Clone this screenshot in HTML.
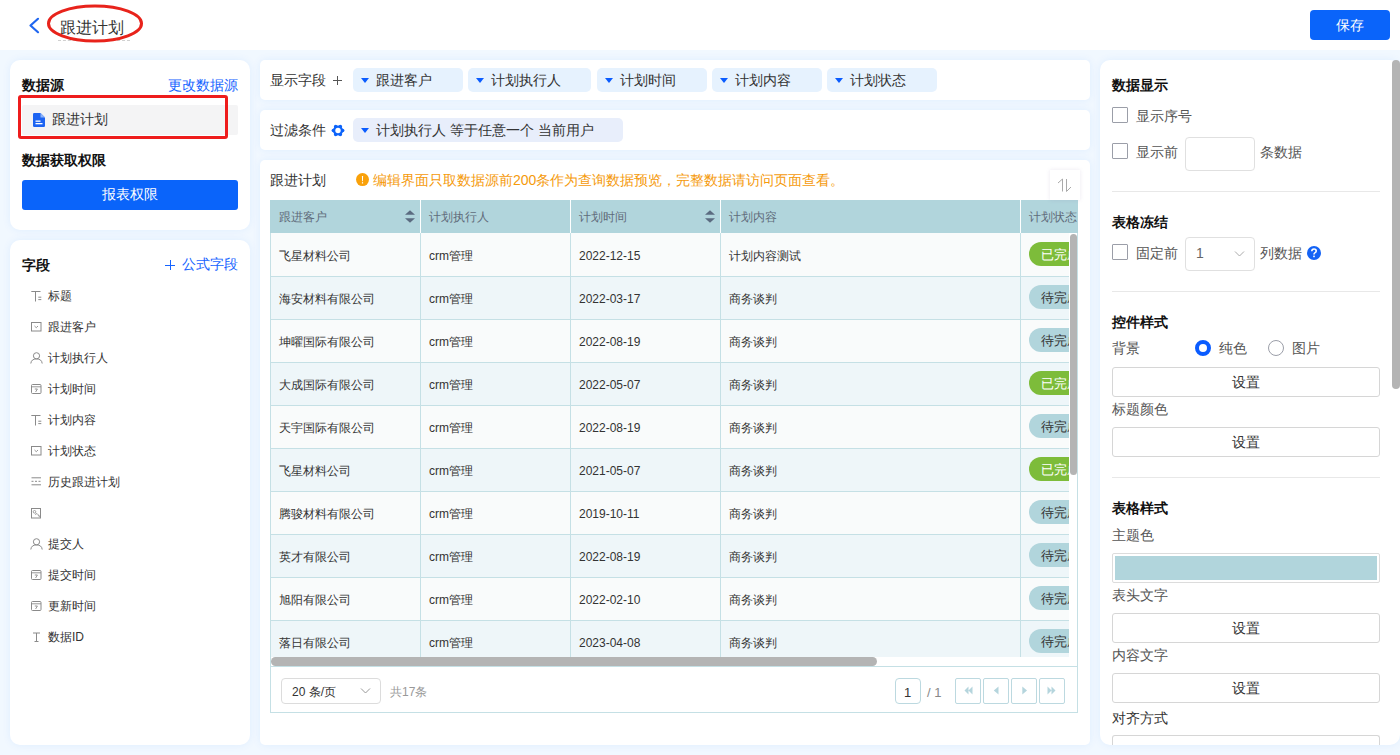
<!DOCTYPE html>
<html><head><meta charset="utf-8">
<style>
*{box-sizing:border-box;margin:0;padding:0}
html,body{width:1400px;height:755px;overflow:hidden}
body{position:relative;background:#f1f8ff;font-family:"Liberation Sans",sans-serif;color:#333;font-size:14px}
.a{position:absolute}
.t{position:absolute;white-space:nowrap;line-height:1}
.card{position:absolute;background:#fff;border-radius:10px;box-shadow:0 0 8px rgba(0,120,255,0.08)}
.b{font-weight:bold;color:#111}
.blue{color:#1664ff}
.fi{position:absolute;left:30px}
.ft{position:absolute;left:48px;font-size:12px;line-height:1;color:#333;white-space:nowrap}
.tag{position:absolute;top:68px;height:24px;background:#e6f2fe;border-radius:5px}
.tri{position:absolute;width:0;height:0;border-left:4.5px solid transparent;border-right:4.5px solid transparent;border-top:5px solid #0a5cff}
.tt{position:absolute;font-size:14px;line-height:1;color:#333;white-space:nowrap}
.cell{position:absolute;font-size:12px;line-height:1;white-space:nowrap;color:#333}
.pill{position:absolute;left:1029px;height:24px;width:60px;border-radius:12px}
.pb{position:absolute;top:678px;width:26px;height:26px;border:1px solid #bcd9e0;border-radius:2px;background:#fff}
.cb{position:absolute;left:1112px;width:16px;height:16px;border:1px solid #9b9ea8;border-radius:1px;background:#fff}
.rl{position:absolute;font-size:14px;line-height:1;color:#555;white-space:nowrap}
.btn{position:absolute;left:1112px;width:268px;height:30px;border:1px solid #d6d6d6;border-radius:3px;background:#fff}
.bt{position:absolute;left:1232px;font-size:14px;line-height:1;color:#333;white-space:nowrap}
.sep{position:absolute;left:1112px;width:268px;height:1px;background:#e8e8e8}
</style></head><body>

<div class="a" style="left:0;top:0;width:1400px;height:50px;background:#fff"></div>
<svg class="a" style="left:27px;top:16px" width="14" height="19" viewBox="0 0 14 19"><polyline points="11,2.8 3.5,9.5 11,16.2" fill="none" stroke="#1f66f0" stroke-width="2.2" stroke-linecap="round" stroke-linejoin="round"/></svg>
<div class="t" style="left:60px;top:20px;font-size:16px;color:#333">跟进计划</div>
<div class="a" style="left:58px;top:40px;width:72px;height:0;border-top:1px dashed #d0d0d0"></div>
<svg class="a" style="left:44px;top:2px" width="104" height="44" viewBox="0 0 104 44"><ellipse cx="51" cy="21.5" rx="46.5" ry="17.5" fill="none" stroke="#e8231b" stroke-width="3"/></svg>
<div class="a" style="left:1310px;top:10px;width:80px;height:30px;background:#0a64fa;border-radius:4px"></div>
<div class="t" style="left:1336px;top:18px;font-size:14px;color:#fff">保存</div>

<div class="card" style="left:10px;top:60px;width:240px;height:170px"></div>
<div class="t b" style="left:22px;top:78px">数据源</div>
<div class="t blue" style="left:168px;top:78px">更改数据源</div>
<div class="a" style="left:22px;top:105px;width:216px;height:30px;background:#f4f4f5;border-radius:2px"></div>
<svg class="a" style="left:33px;top:113px" width="12" height="14" viewBox="0 0 12 14"><path d="M0 1.2Q0 0 1.2 0H7.5L12 4.5V12.8Q12 14 10.8 14H1.2Q0 14 0 12.8Z" fill="#1d64f2"/><path d="M7.5 0V4.5H12" fill="#8fb4f8"/><rect x="2.5" y="7.5" width="5" height="1.3" fill="#fff"/><rect x="2.5" y="10" width="7" height="1.3" fill="#fff"/></svg>
<div class="t" style="left:52px;top:112px;color:#333">跟进计划</div>
<div class="a" style="left:18px;top:95px;width:210px;height:44px;border:3px solid #ee1c1c;border-radius:3px"></div>
<div class="t b" style="left:22px;top:153px">数据获取权限</div>
<div class="a" style="left:22px;top:180px;width:216px;height:30px;background:#0a64fa;border-radius:3px"></div>
<div class="t" style="left:102px;top:187px;color:#fff">报表权限</div>

<div class="card" style="left:10px;top:240px;width:240px;height:505px"></div>
<div class="t b" style="left:22px;top:258px">字段</div>
<svg class="a" style="left:165px;top:260px" width="11" height="11" viewBox="0 0 11 11"><path d="M0 5.5H10M5.5 0V10" stroke="#1664ff" stroke-width="1" fill="none"/></svg><div class="t blue" style="left:182px;top:257px">公式字段</div>

<div class="fi" style="top:289.0px"><svg width="12" height="12" viewBox="0 0 12 12"><path d="M1.3 1.5H10.5M5.5 1.5V11.5M8.3 7.2H11.3M8.3 9.6H11.3" stroke="#8a8a8a" stroke-width="1" fill="none"/></svg></div>
<div class="ft" style="top:289.5px">标题</div>
<div class="fi" style="top:320.0px"><svg width="12" height="12" viewBox="0 0 12 12"><rect x="1.5" y="1.5" width="9.5" height="8.5" stroke="#8a8a8a" stroke-width="1" fill="none"/><path d="M4.5 5L6.25 6.7L8 5" stroke="#8a8a8a" stroke-width="0.9" fill="none"/></svg></div>
<div class="ft" style="top:320.5px">跟进客户</div>
<div class="fi" style="top:351.0px"><svg width="13" height="12" viewBox="0 0 13 12"><circle cx="6.5" cy="3.8" r="3.1" stroke="#8a8a8a" stroke-width="1" fill="none"/><path d="M0.8 11.5Q1.3 6.9 6.5 6.9Q11.7 6.9 12.2 11.5" stroke="#8a8a8a" stroke-width="1" fill="none"/></svg></div>
<div class="ft" style="top:351.5px">计划执行人</div>
<div class="fi" style="top:382.0px"><svg width="12" height="12" viewBox="0 0 12 12"><rect x="1.5" y="1.5" width="9.5" height="9" rx="1" stroke="#8a8a8a" stroke-width="1" fill="none"/><path d="M1.5 3.8H11M4.8 6H7.4L5.6 9" stroke="#8a8a8a" stroke-width="0.9" fill="none"/></svg></div>
<div class="ft" style="top:382.5px">计划时间</div>
<div class="fi" style="top:413.0px"><svg width="12" height="12" viewBox="0 0 12 12"><path d="M1.3 1.5H10.5M5.5 1.5V11.5M8.3 7.2H11.3M8.3 9.6H11.3" stroke="#8a8a8a" stroke-width="1" fill="none"/></svg></div>
<div class="ft" style="top:413.5px">计划内容</div>
<div class="fi" style="top:444.0px"><svg width="12" height="12" viewBox="0 0 12 12"><rect x="1.5" y="1.5" width="9.5" height="8.5" stroke="#8a8a8a" stroke-width="1" fill="none"/><path d="M4.5 5L6.25 6.7L8 5" stroke="#8a8a8a" stroke-width="0.9" fill="none"/></svg></div>
<div class="ft" style="top:444.5px">计划状态</div>
<div class="fi" style="top:475.0px"><svg width="12" height="12" viewBox="0 0 12 12"><path d="M1.5 1.8H11M1.5 8.8H11" stroke="#8a8a8a" stroke-width="1" fill="none"/><path d="M1.5 5.3H11" stroke="#8a8a8a" stroke-width="1" stroke-dasharray="2 1.5" fill="none"/></svg></div>
<div class="ft" style="top:475.5px">历史跟进计划</div>
<div class="fi" style="top:506.0px"><svg width="12" height="12" viewBox="0 0 12 12"><rect x="1.5" y="1.5" width="9" height="9.5" stroke="#8a8a8a" stroke-width="1" fill="none"/><circle cx="4.5" cy="4.8" r="1.3" stroke="#8a8a8a" stroke-width="0.8" fill="none"/><path d="M5 7.5L7 6.5L9.5 9M7.8 8.2L10.5 10.5" stroke="#8a8a8a" stroke-width="0.8" fill="none"/></svg></div>
<div class="fi" style="top:537.0px"><svg width="13" height="12" viewBox="0 0 13 12"><circle cx="6.5" cy="3.8" r="3.1" stroke="#8a8a8a" stroke-width="1" fill="none"/><path d="M0.8 11.5Q1.3 6.9 6.5 6.9Q11.7 6.9 12.2 11.5" stroke="#8a8a8a" stroke-width="1" fill="none"/></svg></div>
<div class="ft" style="top:537.5px">提交人</div>
<div class="fi" style="top:568.0px"><svg width="12" height="12" viewBox="0 0 12 12"><rect x="1.5" y="1.5" width="9.5" height="9" rx="1" stroke="#8a8a8a" stroke-width="1" fill="none"/><path d="M1.5 3.8H11M4.8 6H7.4L5.6 9" stroke="#8a8a8a" stroke-width="0.9" fill="none"/></svg></div>
<div class="ft" style="top:568.5px">提交时间</div>
<div class="fi" style="top:599.0px"><svg width="12" height="12" viewBox="0 0 12 12"><rect x="1.5" y="1.5" width="9.5" height="9" rx="1" stroke="#8a8a8a" stroke-width="1" fill="none"/><path d="M1.5 3.8H11M4.8 6H7.4L5.6 9" stroke="#8a8a8a" stroke-width="0.9" fill="none"/></svg></div>
<div class="ft" style="top:599.5px">更新时间</div>
<div class="fi" style="top:630.0px"><svg width="12" height="12" viewBox="0 0 12 12"><path d="M3 2H10M6.5 2V10.5M4.5 10.5H8.5" stroke="#8a8a8a" stroke-width="1" fill="none"/></svg></div>
<div class="ft" style="top:630.5px">数据ID</div>
<div class="card" style="left:260px;top:60px;width:830px;height:40px;border-radius:5px"></div>
<div class="card" style="left:260px;top:110px;width:830px;height:40px;border-radius:5px"></div>
<div class="card" style="left:260px;top:160px;width:830px;height:585px;border-radius:5px"></div>
<div class="tt" style="left:270px;top:73px">显示字段</div>
<svg class="a" style="left:333px;top:76px" width="9" height="9" viewBox="0 0 9 9"><path d="M0 4.5H9M4.5 0V9" stroke="#555" stroke-width="1" fill="none"/></svg>

<div class="tag" style="left:353px;width:110px"></div><div class="tri" style="left:361px;top:78px"></div><div class="tt" style="left:376px;top:73px">跟进客户</div>
<div class="tag" style="left:468px;width:123px"></div><div class="tri" style="left:476px;top:78px"></div><div class="tt" style="left:491px;top:73px">计划执行人</div>
<div class="tag" style="left:597px;width:110px"></div><div class="tri" style="left:605px;top:78px"></div><div class="tt" style="left:620px;top:73px">计划时间</div>
<div class="tag" style="left:712px;width:110px"></div><div class="tri" style="left:720px;top:78px"></div><div class="tt" style="left:735px;top:73px">计划内容</div>
<div class="tag" style="left:827px;width:110px"></div><div class="tri" style="left:835px;top:78px"></div><div class="tt" style="left:850px;top:73px">计划状态</div>
<div class="tt" style="left:270px;top:123px">过滤条件</div>
<svg class="a" style="left:330.5px;top:123.5px" width="14" height="13" viewBox="0 0 14 13"><g fill="#0c63fa"><circle cx="7" cy="6.5" r="5.1"/><circle cx="11.70" cy="6.50" r="1.75"/><circle cx="9.35" cy="10.57" r="1.75"/><circle cx="4.65" cy="10.57" r="1.75"/><circle cx="2.30" cy="6.50" r="1.75"/><circle cx="4.65" cy="2.43" r="1.75"/><circle cx="9.35" cy="2.43" r="1.75"/></g><circle cx="7" cy="6.5" r="2.7" fill="#fff"/></svg>
<div class="a" style="left:353px;top:118px;width:270px;height:24px;background:#e8eefb;border-radius:5px"></div>
<div class="tri" style="left:361px;top:128px"></div>
<div class="tt" style="left:376px;top:123px">计划执行人 等于任意一个 当前用户</div>

<div class="tt" style="left:270px;top:173px">跟进计划</div>
<svg class="a" style="left:356px;top:173px" width="14" height="14" viewBox="0 0 14 14"><circle cx="6.5" cy="6.6" r="6.5" fill="#f9a10a"/><path d="M5.9 3H7.1L6.9 8.3H6.1Z" fill="#fff"/><rect x="5.9" y="9.2" width="1.2" height="1.3" fill="#fff"/></svg>
<div class="tt" style="left:373px;top:173px;color:#f59a0b">编辑界面只取数据源前200条作为查询数据预览，完整数据请访问页面查看。</div>

<div class="a" style="left:270px;top:200px;width:808px;height:513px;border:1px solid #c5e0e5;border-top:none;background:#fff"></div>
<div class="a" style="left:270px;top:200px;width:808px;height:33px;background:#b1d5dc"></div>
<div class="a" style="left:420px;top:200px;width:1px;height:33px;background:#fff"></div>
<div class="a" style="left:570px;top:200px;width:1px;height:33px;background:#fff"></div>
<div class="a" style="left:720px;top:200px;width:1px;height:33px;background:#fff"></div>
<div class="a" style="left:1020px;top:200px;width:1px;height:33px;background:#fff"></div>
<div class="cell" style="left:279px;top:211px;color:#5f6b7a">跟进客户</div>
<div class="cell" style="left:429px;top:211px;color:#5f6b7a">计划执行人</div>
<div class="cell" style="left:579px;top:211px;color:#5f6b7a">计划时间</div>
<div class="cell" style="left:729px;top:211px;color:#5f6b7a">计划内容</div>
<div class="cell" style="left:1029px;top:211px;color:#5f6b7a">计划状态</div>
<svg class="a" style="left:405px;top:210px" width="10" height="13" viewBox="0 0 10 13"><path d="M0 4.8L5 0.3L10 4.8Z M0 8.2L5 12.7L10 8.2Z" fill="#5b6b80"/></svg>
<svg class="a" style="left:705px;top:210px" width="10" height="13" viewBox="0 0 10 13"><path d="M0 4.8L5 0.3L10 4.8Z M0 8.2L5 12.7L10 8.2Z" fill="#5b6b80"/></svg>
<div class="a" style="left:271px;top:233px;width:798px;height:424px;overflow:hidden">
<div class="a" style="left:0;top:0px;width:900px;height:43px;background:#f9fbfb"></div>
<div class="a" style="left:0;top:43px;width:900px;height:1px;background:#c5e0e5;z-index:2"></div>
<div class="a" style="left:149px;top:0px;width:1px;height:43px;background:#c5e0e5"></div>
<div class="a" style="left:299px;top:0px;width:1px;height:43px;background:#c5e0e5"></div>
<div class="a" style="left:449px;top:0px;width:1px;height:43px;background:#c5e0e5"></div>
<div class="a" style="left:749px;top:0px;width:1px;height:43px;background:#c5e0e5"></div>
<div class="cell" style="left:8px;top:17px">飞星材料公司</div>
<div class="cell" style="left:158px;top:17px">crm管理</div>
<div class="cell" style="left:308px;top:17px">2022-12-15</div>
<div class="cell" style="left:458px;top:17px">计划内容测试</div>
<div class="pill" style="left:758px;top:9px;background:#7dbc3a"></div>
<div class="cell" style="left:770px;top:15px;font-size:13px;color:#fff">已完成</div>
<div class="a" style="left:0;top:43px;width:900px;height:43px;background:#eef6f9"></div>
<div class="a" style="left:0;top:86px;width:900px;height:1px;background:#c5e0e5;z-index:2"></div>
<div class="a" style="left:149px;top:43px;width:1px;height:43px;background:#c5e0e5"></div>
<div class="a" style="left:299px;top:43px;width:1px;height:43px;background:#c5e0e5"></div>
<div class="a" style="left:449px;top:43px;width:1px;height:43px;background:#c5e0e5"></div>
<div class="a" style="left:749px;top:43px;width:1px;height:43px;background:#c5e0e5"></div>
<div class="cell" style="left:8px;top:60px">海安材料有限公司</div>
<div class="cell" style="left:158px;top:60px">crm管理</div>
<div class="cell" style="left:308px;top:60px">2022-03-17</div>
<div class="cell" style="left:458px;top:60px">商务谈判</div>
<div class="pill" style="left:758px;top:52px;background:#b1d5dc"></div>
<div class="cell" style="left:770px;top:58px;font-size:13px;color:#333">待完成</div>
<div class="a" style="left:0;top:86px;width:900px;height:43px;background:#f9fbfb"></div>
<div class="a" style="left:0;top:129px;width:900px;height:1px;background:#c5e0e5;z-index:2"></div>
<div class="a" style="left:149px;top:86px;width:1px;height:43px;background:#c5e0e5"></div>
<div class="a" style="left:299px;top:86px;width:1px;height:43px;background:#c5e0e5"></div>
<div class="a" style="left:449px;top:86px;width:1px;height:43px;background:#c5e0e5"></div>
<div class="a" style="left:749px;top:86px;width:1px;height:43px;background:#c5e0e5"></div>
<div class="cell" style="left:8px;top:103px">坤曜国际有限公司</div>
<div class="cell" style="left:158px;top:103px">crm管理</div>
<div class="cell" style="left:308px;top:103px">2022-08-19</div>
<div class="cell" style="left:458px;top:103px">商务谈判</div>
<div class="pill" style="left:758px;top:95px;background:#b1d5dc"></div>
<div class="cell" style="left:770px;top:101px;font-size:13px;color:#333">待完成</div>
<div class="a" style="left:0;top:129px;width:900px;height:43px;background:#eef6f9"></div>
<div class="a" style="left:0;top:172px;width:900px;height:1px;background:#c5e0e5;z-index:2"></div>
<div class="a" style="left:149px;top:129px;width:1px;height:43px;background:#c5e0e5"></div>
<div class="a" style="left:299px;top:129px;width:1px;height:43px;background:#c5e0e5"></div>
<div class="a" style="left:449px;top:129px;width:1px;height:43px;background:#c5e0e5"></div>
<div class="a" style="left:749px;top:129px;width:1px;height:43px;background:#c5e0e5"></div>
<div class="cell" style="left:8px;top:146px">大成国际有限公司</div>
<div class="cell" style="left:158px;top:146px">crm管理</div>
<div class="cell" style="left:308px;top:146px">2022-05-07</div>
<div class="cell" style="left:458px;top:146px">商务谈判</div>
<div class="pill" style="left:758px;top:138px;background:#7dbc3a"></div>
<div class="cell" style="left:770px;top:144px;font-size:13px;color:#fff">已完成</div>
<div class="a" style="left:0;top:172px;width:900px;height:43px;background:#f9fbfb"></div>
<div class="a" style="left:0;top:215px;width:900px;height:1px;background:#c5e0e5;z-index:2"></div>
<div class="a" style="left:149px;top:172px;width:1px;height:43px;background:#c5e0e5"></div>
<div class="a" style="left:299px;top:172px;width:1px;height:43px;background:#c5e0e5"></div>
<div class="a" style="left:449px;top:172px;width:1px;height:43px;background:#c5e0e5"></div>
<div class="a" style="left:749px;top:172px;width:1px;height:43px;background:#c5e0e5"></div>
<div class="cell" style="left:8px;top:189px">天宇国际有限公司</div>
<div class="cell" style="left:158px;top:189px">crm管理</div>
<div class="cell" style="left:308px;top:189px">2022-08-19</div>
<div class="cell" style="left:458px;top:189px">商务谈判</div>
<div class="pill" style="left:758px;top:181px;background:#b1d5dc"></div>
<div class="cell" style="left:770px;top:187px;font-size:13px;color:#333">待完成</div>
<div class="a" style="left:0;top:215px;width:900px;height:43px;background:#eef6f9"></div>
<div class="a" style="left:0;top:258px;width:900px;height:1px;background:#c5e0e5;z-index:2"></div>
<div class="a" style="left:149px;top:215px;width:1px;height:43px;background:#c5e0e5"></div>
<div class="a" style="left:299px;top:215px;width:1px;height:43px;background:#c5e0e5"></div>
<div class="a" style="left:449px;top:215px;width:1px;height:43px;background:#c5e0e5"></div>
<div class="a" style="left:749px;top:215px;width:1px;height:43px;background:#c5e0e5"></div>
<div class="cell" style="left:8px;top:232px">飞星材料公司</div>
<div class="cell" style="left:158px;top:232px">crm管理</div>
<div class="cell" style="left:308px;top:232px">2021-05-07</div>
<div class="cell" style="left:458px;top:232px">商务谈判</div>
<div class="pill" style="left:758px;top:224px;background:#7dbc3a"></div>
<div class="cell" style="left:770px;top:230px;font-size:13px;color:#fff">已完成</div>
<div class="a" style="left:0;top:258px;width:900px;height:43px;background:#f9fbfb"></div>
<div class="a" style="left:0;top:301px;width:900px;height:1px;background:#c5e0e5;z-index:2"></div>
<div class="a" style="left:149px;top:258px;width:1px;height:43px;background:#c5e0e5"></div>
<div class="a" style="left:299px;top:258px;width:1px;height:43px;background:#c5e0e5"></div>
<div class="a" style="left:449px;top:258px;width:1px;height:43px;background:#c5e0e5"></div>
<div class="a" style="left:749px;top:258px;width:1px;height:43px;background:#c5e0e5"></div>
<div class="cell" style="left:8px;top:275px">腾骏材料有限公司</div>
<div class="cell" style="left:158px;top:275px">crm管理</div>
<div class="cell" style="left:308px;top:275px">2019-10-11</div>
<div class="cell" style="left:458px;top:275px">商务谈判</div>
<div class="pill" style="left:758px;top:267px;background:#b1d5dc"></div>
<div class="cell" style="left:770px;top:273px;font-size:13px;color:#333">待完成</div>
<div class="a" style="left:0;top:301px;width:900px;height:43px;background:#eef6f9"></div>
<div class="a" style="left:0;top:344px;width:900px;height:1px;background:#c5e0e5;z-index:2"></div>
<div class="a" style="left:149px;top:301px;width:1px;height:43px;background:#c5e0e5"></div>
<div class="a" style="left:299px;top:301px;width:1px;height:43px;background:#c5e0e5"></div>
<div class="a" style="left:449px;top:301px;width:1px;height:43px;background:#c5e0e5"></div>
<div class="a" style="left:749px;top:301px;width:1px;height:43px;background:#c5e0e5"></div>
<div class="cell" style="left:8px;top:318px">英才有限公司</div>
<div class="cell" style="left:158px;top:318px">crm管理</div>
<div class="cell" style="left:308px;top:318px">2022-08-19</div>
<div class="cell" style="left:458px;top:318px">商务谈判</div>
<div class="pill" style="left:758px;top:310px;background:#b1d5dc"></div>
<div class="cell" style="left:770px;top:316px;font-size:13px;color:#333">待完成</div>
<div class="a" style="left:0;top:344px;width:900px;height:43px;background:#f9fbfb"></div>
<div class="a" style="left:0;top:387px;width:900px;height:1px;background:#c5e0e5;z-index:2"></div>
<div class="a" style="left:149px;top:344px;width:1px;height:43px;background:#c5e0e5"></div>
<div class="a" style="left:299px;top:344px;width:1px;height:43px;background:#c5e0e5"></div>
<div class="a" style="left:449px;top:344px;width:1px;height:43px;background:#c5e0e5"></div>
<div class="a" style="left:749px;top:344px;width:1px;height:43px;background:#c5e0e5"></div>
<div class="cell" style="left:8px;top:361px">旭阳有限公司</div>
<div class="cell" style="left:158px;top:361px">crm管理</div>
<div class="cell" style="left:308px;top:361px">2022-02-10</div>
<div class="cell" style="left:458px;top:361px">商务谈判</div>
<div class="pill" style="left:758px;top:353px;background:#b1d5dc"></div>
<div class="cell" style="left:770px;top:359px;font-size:13px;color:#333">待完成</div>
<div class="a" style="left:0;top:387px;width:900px;height:43px;background:#eef6f9"></div>
<div class="a" style="left:0;top:430px;width:900px;height:1px;background:#c5e0e5;z-index:2"></div>
<div class="a" style="left:149px;top:387px;width:1px;height:43px;background:#c5e0e5"></div>
<div class="a" style="left:299px;top:387px;width:1px;height:43px;background:#c5e0e5"></div>
<div class="a" style="left:449px;top:387px;width:1px;height:43px;background:#c5e0e5"></div>
<div class="a" style="left:749px;top:387px;width:1px;height:43px;background:#c5e0e5"></div>
<div class="cell" style="left:8px;top:404px">落日有限公司</div>
<div class="cell" style="left:158px;top:404px">crm管理</div>
<div class="cell" style="left:308px;top:404px">2023-04-08</div>
<div class="cell" style="left:458px;top:404px">商务谈判</div>
<div class="pill" style="left:758px;top:396px;background:#b1d5dc"></div>
<div class="cell" style="left:770px;top:402px;font-size:13px;color:#333">待完成</div>
</div>
<div class="a" style="left:1069px;top:233px;width:8px;height:424px;background:#fff"></div>
<div class="a" style="left:1070px;top:234px;width:7px;height:241px;background:#b4b4b4;border-radius:4px"></div>
<div class="a" style="left:271px;top:657px;width:806px;height:9px;background:#fff"></div>
<div class="a" style="left:271px;top:657px;width:606px;height:9px;background:#b4b4b4;border-radius:5px"></div>
<div class="a" style="left:270px;top:666px;width:808px;height:1px;background:#c5e0e5"></div>
<div class="a" style="left:1050px;top:170px;width:30px;height:30px;background:#fff;box-shadow:0 0 4px rgba(120,100,160,0.15)"></div>
<svg class="a" style="left:1055px;top:177px" width="20" height="16" viewBox="0 0 20 16"><path d="M3 6L7.5 2V14.5M11.5 2V14.5L16 10" stroke="#aaa" stroke-width="1" fill="none"/></svg>
<div class="a" style="left:281px;top:678px;width:100px;height:26px;border:1px solid #dcdcdc;border-radius:4px;background:#fff"></div>
<div class="cell" style="left:292px;top:686px">20 条/页</div>
<svg class="a" style="left:360px;top:687px" width="11" height="8" viewBox="0 0 11 8"><path d="M1 1.5L5.5 6L10 1.5" stroke="#999" stroke-width="1" fill="none"/></svg>
<div class="cell" style="left:390px;top:686px;color:#999">共17条</div>
<div class="a" style="left:895px;top:678px;width:26px;height:26px;border:1px solid #bcd9e0;border-radius:4px;background:#fff"></div>
<div class="cell" style="left:904px;top:686px;font-size:13px">1</div>
<div class="cell" style="left:927px;top:686px;font-size:13px;color:#888">/ 1</div>

<div class="pb" style="left:955px"></div><svg class="a" style="left:961px;top:684px" width="13" height="13" viewBox="0 0 13 13" fill="#b5d5dd"><path d="M7.5 2.5L3.5 6.5L7.5 10.5Z M11.5 2.5L7.5 6.5L11.5 10.5Z"/></svg>
<div class="pb" style="left:983px"></div><svg class="a" style="left:989px;top:684px" width="13" height="13" viewBox="0 0 13 13" fill="#b5d5dd"><path d="M9.5 2.5L4.8 6.5L9.5 10.5Z"/></svg>
<div class="pb" style="left:1011px"></div><svg class="a" style="left:1017px;top:684px" width="13" height="13" viewBox="0 0 13 13" fill="#b5d5dd"><path d="M5.3 2.5L10 6.5L5.3 10.5Z"/></svg>
<div class="pb" style="left:1039px"></div><svg class="a" style="left:1045px;top:684px" width="13" height="13" viewBox="0 0 13 13" fill="#b5d5dd"><path d="M2.5 2.5L6.5 6.5L2.5 10.5Z M6.5 2.5L10.5 6.5L6.5 10.5Z"/></svg>
<div class="card" style="left:1100px;top:60px;width:300px;height:685px"></div>
<div class="a" style="left:1392px;top:60px;width:8px;height:329px;background:#b4b4b4;border-radius:4px"></div>
<div class="t b" style="left:1112px;top:78px">数据显示</div>
<div class="cb" style="top:107px"></div><div class="rl" style="left:1136px;top:109px">显示序号</div>
<div class="cb" style="top:143px"></div><div class="rl" style="left:1136px;top:145px">显示前</div>
<div class="a" style="left:1185px;top:137px;width:70px;height:34px;border:1px solid #e0e0e0;border-radius:4px"></div>
<div class="rl" style="left:1260px;top:145px">条数据</div>
<div class="sep" style="top:191px"></div>
<div class="t b" style="left:1112px;top:215px">表格冻结</div>
<div class="cb" style="top:244px"></div><div class="rl" style="left:1136px;top:246px">固定前</div>
<div class="a" style="left:1185px;top:237px;width:70px;height:34px;border:1px solid #e0e0e0;border-radius:4px"></div>
<div class="rl" style="left:1196px;top:246px;color:#666">1</div>
<svg class="a" style="left:1234px;top:250px" width="11" height="8" viewBox="0 0 11 8"><path d="M1 1.5L5.5 6L10 1.5" stroke="#aaa" stroke-width="1" fill="none"/></svg>
<div class="rl" style="left:1260px;top:246px">列数据</div>
<svg class="a" style="left:1307px;top:246px" width="14" height="14" viewBox="0 0 14 14"><circle cx="7" cy="7" r="7" fill="#1463f5"/><path d="M4.8 5.3Q4.8 3 7 3Q9.2 3 9.2 5Q9.2 6.2 7.8 6.9Q7 7.3 7 8.5" stroke="#fff" stroke-width="1.6" fill="none"/><rect x="6.2" y="9.6" width="1.6" height="1.6" fill="#fff"/></svg>
<div class="sep" style="top:291px"></div>
<div class="t b" style="left:1112px;top:315px">控件样式</div>
<div class="rl" style="left:1112px;top:341px">背景</div>
<svg class="a" style="left:1195px;top:340px" width="16" height="16" viewBox="0 0 16 16"><circle cx="8" cy="8" r="6" stroke="#0a5cff" stroke-width="4" fill="#fff"/></svg>
<div class="rl" style="left:1219px;top:341px">纯色</div>
<svg class="a" style="left:1268px;top:340px" width="16" height="16" viewBox="0 0 16 16"><circle cx="8" cy="8" r="7.5" stroke="#9b9ea8" stroke-width="1" fill="#fff"/></svg>
<div class="rl" style="left:1292px;top:341px">图片</div>
<div class="btn" style="top:367px"></div><div class="bt" style="top:375px">设置</div>
<div class="rl" style="left:1112px;top:402px">标题颜色</div>
<div class="btn" style="top:427px"></div><div class="bt" style="top:435px">设置</div>
<div class="sep" style="top:477px"></div>
<div class="t b" style="left:1112px;top:501px">表格样式</div>
<div class="rl" style="left:1112px;top:528px">主题色</div>
<div class="a" style="left:1112px;top:553px;width:268px;height:30px;border:1px solid #dcdcdc;border-radius:2px;background:#fff"></div>
<div class="a" style="left:1115px;top:556px;width:262px;height:24px;background:#b1d5dc"></div>
<div class="rl" style="left:1112px;top:588px">表头文字</div>
<div class="btn" style="top:613px"></div><div class="bt" style="top:621px">设置</div>
<div class="rl" style="left:1112px;top:648px">内容文字</div>
<div class="btn" style="top:673px"></div><div class="bt" style="top:681px">设置</div>
<div class="rl" style="left:1112px;top:711px;color:#333">对齐方式</div>
<div class="btn" style="top:735px;height:10px;border-bottom:none;border-radius:3px 3px 0 0"></div>

</body></html>
